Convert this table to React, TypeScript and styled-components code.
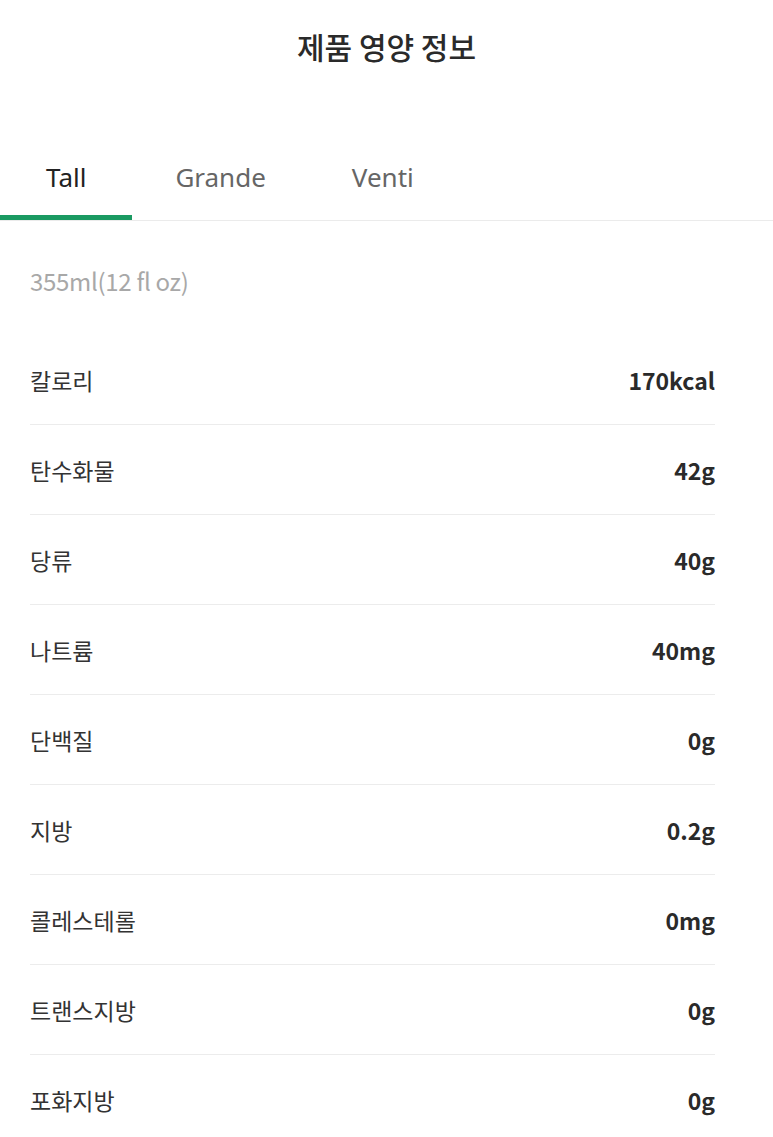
import React from "react";
import styled, { createGlobalStyle } from "styled-components";

const GlobalStyle = createGlobalStyle`
  html, body { margin: 0; padding: 0; background: #fff; }
  body { font-family: "Noto Sans CJK KR", "Noto Sans", sans-serif; color: #222; }
`;

const Page = styled.div`
  width: 773px;
  display: flex;
  flex-direction: column;
`;

const Header = styled.header`
  height: 92px;
  display: flex;
  align-items: center;
  justify-content: center;
`;

const Title = styled.h1`
  margin: 0;
  font-size: 30px;
  font-weight: 500;
  color: #2a2a2a;
  line-height: 1;
`;

const TabBar = styled.nav`
  margin-top: 54px;
  display: flex;
  border-bottom: 1px solid #ebebeb;
`;

const Tab = styled.div<{ $active?: boolean; $pad: number }>`
  padding: 0 ${(p) => p.$pad}px 8px;
  height: 74px;
  box-sizing: border-box;
  display: flex;
  align-items: center;
  font-family: "Noto Sans", "Roboto", sans-serif;
  font-size: 26px;
  color: ${(p) => (p.$active ? "#222" : "#666")};
  border-bottom: 5px solid ${(p) => (p.$active ? "#1a9a62" : "transparent")};
`;

const Content = styled.section`
  padding: 0 58px 0 30px;
  display: flex;
  flex-direction: column;
`;

const Spec = styled.div`
  margin-top: 44px;
  font-size: 24px;
  font-weight: 400;
  color: #a8a8a8;
  line-height: 32px;
  letter-spacing: -0.3px;
`;

const List = styled.div`
  margin-top: 38px;
  display: flex;
  flex-direction: column;
`;

const Row = styled.div<{ $last?: boolean }>`
  display: flex;
  justify-content: space-between;
  align-items: center;
  height: 90px;
  box-sizing: border-box;
  border-bottom: ${(p) => (p.$last ? "none" : "1px solid #ececec")};
  line-height: 32px;
`;

const Label = styled.span`
  font-size: 23px;
  color: #333;
`;

const Value = styled.span`
  font-size: 23px;
  font-weight: 700;
  color: #2a2a2a;
`;

const rows: [string, string][] = [
  ["칼로리", "170kcal"],
  ["탄수화물", "42g"],
  ["당류", "40g"],
  ["나트륨", "40mg"],
  ["단백질", "0g"],
  ["지방", "0.2g"],
  ["콜레스테롤", "0mg"],
  ["트랜스지방", "0g"],
  ["포화지방", "0g"],
];

export default function App() {
  return (
    <>
      <GlobalStyle />
      <Page>
        <Header>
          <Title>제품 영양 정보</Title>
        </Header>
        <TabBar>
          <Tab $active $pad={46}>Tall</Tab>
          <Tab $pad={43}>Grande</Tab>
          <Tab $pad={43}>Venti</Tab>
        </TabBar>
        <Content>
          <Spec>355ml(12 fl oz)</Spec>
          <List>
            {rows.map(([k, v], i) => (
              <Row key={k} $last={i === rows.length - 1}>
                <Label>{k}</Label>
                <Value>{v}</Value>
              </Row>
            ))}
          </List>
        </Content>
      </Page>
    </>
  );
}
